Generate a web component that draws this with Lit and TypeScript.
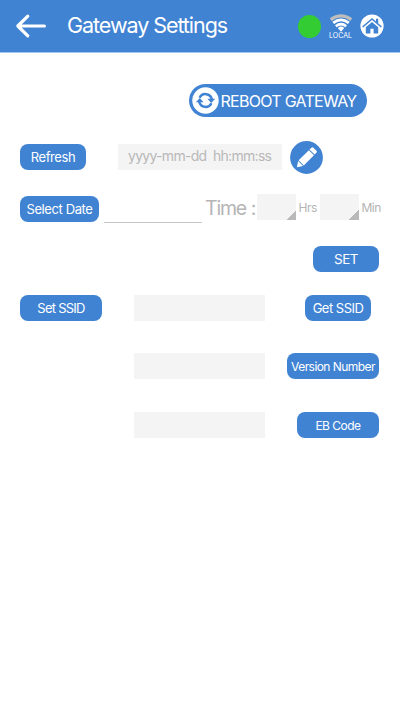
import { LitElement, html, css, svg } from "lit";
import { customElement } from "lit/decorators.js";

const arrow = svg`<svg class="back" width="32" height="26" viewBox="0 0 32 26" fill="none" stroke="#fff" stroke-width="3.2" stroke-linecap="round" stroke-linejoin="round"><path d="M12.8 3.2 2.8 13l10 9.8M3.4 13h26"/></svg>`;

const wifi = svg`<svg width="24" height="18" viewBox="0 0 24 18" fill="none" stroke="#fff"><path d="M1.7 5.6Q12 -1.9 22.3 5.6" stroke="#bdbdbd" stroke-width="3.2"/><path d="M4.2 8.9Q12 2.9 19.8 8.9" stroke-width="2.7"/><path d="M6.8 12.2Q12 8 17.2 12.2" stroke-width="2.5"/><path d="M8.8 14Q12 11.2 15.2 14L12 17.8Z" fill="#fff" stroke="none"/></svg>`;

const home = svg`<svg class="home" width="24" height="24" viewBox="0 0 24 24"><circle cx="12" cy="12" r="11.6" fill="#fff"/><path d="M2.6 13 12 5l9.4 8" fill="none" stroke="#4183d3" stroke-width="1.6"/><path d="M16 4.8h2.2v5l-2.2-1.8zM5.8 13.3 12 8.1l6.2 5.2v6.3h-4.6v-4.8h-3.2v4.8H5.8z" fill="#4183d3"/></svg>`;

const sync = svg`<svg width="27" height="27" viewBox="0 0 27 27"><circle cx="13.5" cy="13.5" r="13.2" fill="#fff"/><path d="M7.6 10.8A6.5 6.5 0 0 1 19.8 12.2M19.4 16.2A6.5 6.5 0 0 1 7.2 14.8" fill="none" stroke="#4183d3" stroke-width="2.5"/><path d="M15.4 11.8h7.8l-4 4.2zM3.8 15.2h7.8l-3.8-4.2z" fill="#4183d3"/></svg>`;

const pencil = svg`<svg class="pencil" width="33" height="33" viewBox="0 0 33 33"><circle cx="16.5" cy="16.5" r="16.4" fill="#4183d3"/><g transform="translate(6.9 26.2) rotate(-45)" fill="#fff"><path d="M0 0 5.2-3.5v7zM6.1-3.6h14.4v7.2H6.1zM21.4-3.6h2.6q1.5 0 1.5 1.5v4.2q0 1.5-1.5 1.5h-2.6z"/></g></svg>`;

@customElement("app-root")
export class AppRoot extends LitElement {
  static styles = css`
    :host { display: block; height: 711px; background: #fff; overflow: hidden; font-family: Inter, "Liberation Sans", sans-serif; }
    * { box-sizing: border-box; }
    svg { display: block; flex: none; }
    header { height: 53px; background: #4183d3; border-bottom: 1px solid #a6c5ec; display: flex; align-items: center; color: #fff; padding: 0 16px 0 15px; }
    h1 { margin: 0 0 2px 20px; font-size: 21.5px; font-weight: 400; letter-spacing: -1.05px; line-height: 28px; white-space: nowrap; flex: 1; }
    .dot { width: 23px; height: 23px; border-radius: 50%; background: #33cc33; }
    .net { width: 24px; margin: 1px 7.5px 0 8px; font-size: 7px; line-height: 7px; text-align: center; }
    .row { display: flex; align-items: center; padding: 0 21px 0 20px; white-space: nowrap; }
    .reboot { height: 33px; margin: 31px 33px 0 189px; padding-left: 3px; border-radius: 17px; background: #4183d3; color: #fff; display: flex; align-items: center; font-size: 16px; font-weight: 400; letter-spacing: -0.72px; white-space: nowrap; }
    .reboot span { margin: 1px 0 0 1.5px; }
    button { height: 26px; border: 0; border-radius: 8px; padding: 1px 0 0; background: #4183d3; color: #fff; font: 400 13px Inter, sans-serif; text-align: center; white-space: nowrap; flex: none; }
    .field { height: 26px; width: 131px; background: #f4f4f4; flex: none; }
    .push { margin-left: auto; }
    .r1 { height: 33px; margin-top: 24px; align-items: flex-start; }
    .refresh { width: 66px; margin-top: 3px; padding: 0 0 1px; letter-spacing: -0.4px; }
    .stamp { width: 164px; margin: 3px 8px 0 32px; padding-left: 10px; line-height: 24px; font-size: 14px; font-weight: 400; letter-spacing: -0.7px; color: #b8b8b8; white-space: pre; }
    .r2 { height: 30px; margin-top: 19px; color: #b4b4b4; font-weight: 400; }
    .date { width: 79px; margin-top: 2px; padding: 0 0 1px; letter-spacing: -0.4px; }
    .line { width: 98px; height: 1px; margin: 28px 0 0 5px; background: #c6c6c6; flex: none; }
    .time { width: 54.5px; padding-left: 3px; font-size: 19.5px; letter-spacing: -1.2px; word-spacing: 0.5px; line-height: 28px; flex: none; }
    .spin { width: 39.5px; height: 26px; margin-bottom: 2px; flex: none; background: linear-gradient(135deg, transparent 50%, #b9b9b9 50%) right bottom / 10px 10px no-repeat, #f4f4f4; }
    .unit { width: 23.5px; padding-left: 2.5px; margin-bottom: 1px; font-size: 12px; letter-spacing: -0.5px; flex: none; }
    .r3 { margin-top: 22.5px; }
    .set { width: 66px; padding: 0; font-size: 13.5px; letter-spacing: -0.5px; }
    .r4 { margin-top: 23px; }
    .setssid { width: 82px; letter-spacing: -0.75px; }
    .getssid { width: 66px; margin-right: 8px; letter-spacing: -0.5px; }
    .mid { margin-left: 32px; }
    .r5, .r6 { margin-top: 32.5px; }
    .solo { margin-left: 114px; }
    .ver { width: 92px; font-size: 12px; letter-spacing: -0.56px; }
    .eb { width: 82px; font-size: 12px; letter-spacing: -0.5px; padding-top: 2px; }
  `;

  render() {
    return html`
      <header>
        ${arrow}
        <h1>Gateway Settings</h1>
        <div class="dot"></div>
        <div class="net">${wifi}LOCAL</div>
        ${home}
      </header>
      <div class="reboot">${sync}<span>REBOOT GATEWAY</span></div>
      <div class="row r1">
        <button class="refresh">Refresh</button>
        <div class="field stamp">yyyy-mm-dd  hh:mm:ss</div>
        ${pencil}
      </div>
      <div class="row r2">
        <button class="date">Select Date</button>
        <div class="line"></div>
        <div class="time">Time :</div>
        <div class="spin"></div><span class="unit">Hrs</span>
        <div class="spin"></div><span class="unit">Min</span>
      </div>
      <div class="row r3"><button class="set push">SET</button></div>
      <div class="row r4">
        <button class="setssid">Set SSID</button>
        <div class="field mid"></div>
        <button class="getssid push">Get SSID</button>
      </div>
      <div class="row r5"><div class="field solo"></div><button class="ver push">Version Number</button></div>
      <div class="row r6"><div class="field solo"></div><button class="eb push">EB Code</button></div>
    `;
  }
}
